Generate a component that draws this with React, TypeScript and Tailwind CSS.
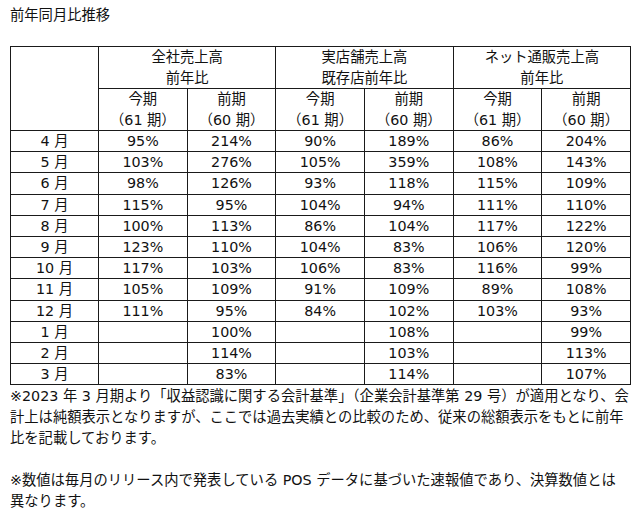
const rows: [string, string, string, string, string, string, string][] = [
  ['4 月', '95%', '214%', '90%', '189%', '86%', '204%'],
  ['5 月', '103%', '276%', '105%', '359%', '108%', '143%'],
  ['6 月', '98%', '126%', '93%', '118%', '115%', '109%'],
  ['7 月', '115%', '95%', '104%', '94%', '111%', '110%'],
  ['8 月', '100%', '113%', '86%', '104%', '117%', '122%'],
  ['9 月', '123%', '110%', '104%', '83%', '106%', '120%'],
  ['10 月', '117%', '103%', '106%', '83%', '116%', '99%'],
  ['11 月', '105%', '109%', '91%', '109%', '89%', '108%'],
  ['12 月', '111%', '95%', '84%', '102%', '103%', '93%'],
  ['1 月', '', '100%', '', '108%', '', '99%'],
  ['2 月', '', '114%', '', '103%', '', '113%'],
  ['3 月', '', '83%', '', '114%', '', '107%'],
];

const groups = [
  ['全社売上高', '前年比'],
  ['実店舗売上高', '既存店前年比'],
  ['ネット通販売上高', '前年比'],
];

const cell = 'border border-[#1a1a1a] text-center p-0';

export default function App() {
  return (
    <div
      className="w-[640px] h-[516px] bg-white text-[#111] text-[14.3px] pl-[10px] pt-[5px] overflow-hidden"
      style={{ fontFamily: '"DejaVu Sans", "Noto Sans CJK JP", sans-serif' }}
    >
      <div className="leading-[21px]">前年同月比推移</div>

      <table className="mt-[20px] w-[621px] table-fixed border-collapse">
        <colgroup>
          <col className="w-[88px]" />
          <col />
          <col />
          <col />
          <col />
          <col />
          <col />
        </colgroup>
        <thead>
          <tr>
            <th rowSpan={2} className={cell}></th>
            {groups.map(([a, b]) => (
              <th key={a} colSpan={2} className={`${cell} font-normal leading-[20.5px]`}>
                {a}
                <br />
                {b}
              </th>
            ))}
          </tr>
          <tr>
            {groups.map(([a]) => (
              <>
                <th key={a + '1'} className={`${cell} font-normal leading-[20.5px]`}>
                  今期
                  <br />
                  （61 期）
                </th>
                <th key={a + '2'} className={`${cell} font-normal leading-[20.5px]`}>
                  前期
                  <br />
                  （60 期）
                </th>
              </>
            ))}
          </tr>
        </thead>
        <tbody>
          {rows.map((r) => (
            <tr key={r[0]}>
              {r.map((v, i) => (
                <td key={i} className={`${cell} leading-[20.2px]`}>
                  {v}
                </td>
              ))}
            </tr>
          ))}
        </tbody>
      </table>

      <div className="mt-[1px] leading-[21px] whitespace-nowrap">
        <p>
          ※2023 年 3 月期より「収益認識に関する会計基準」（企業会計基準第 29 号）が適用となり、会
          <br />
          計上は純額表示となりますが、ここでは過去実績との比較のため、従来の総額表示をもとに前年
          <br />
          比を記載しております。
        </p>
        <p className="mt-[21px]">
          ※数値は毎月のリリース内で発表している POS データに基づいた速報値であり、決算数値とは
          <br />
          異なります。
        </p>
      </div>
    </div>
  );
}
